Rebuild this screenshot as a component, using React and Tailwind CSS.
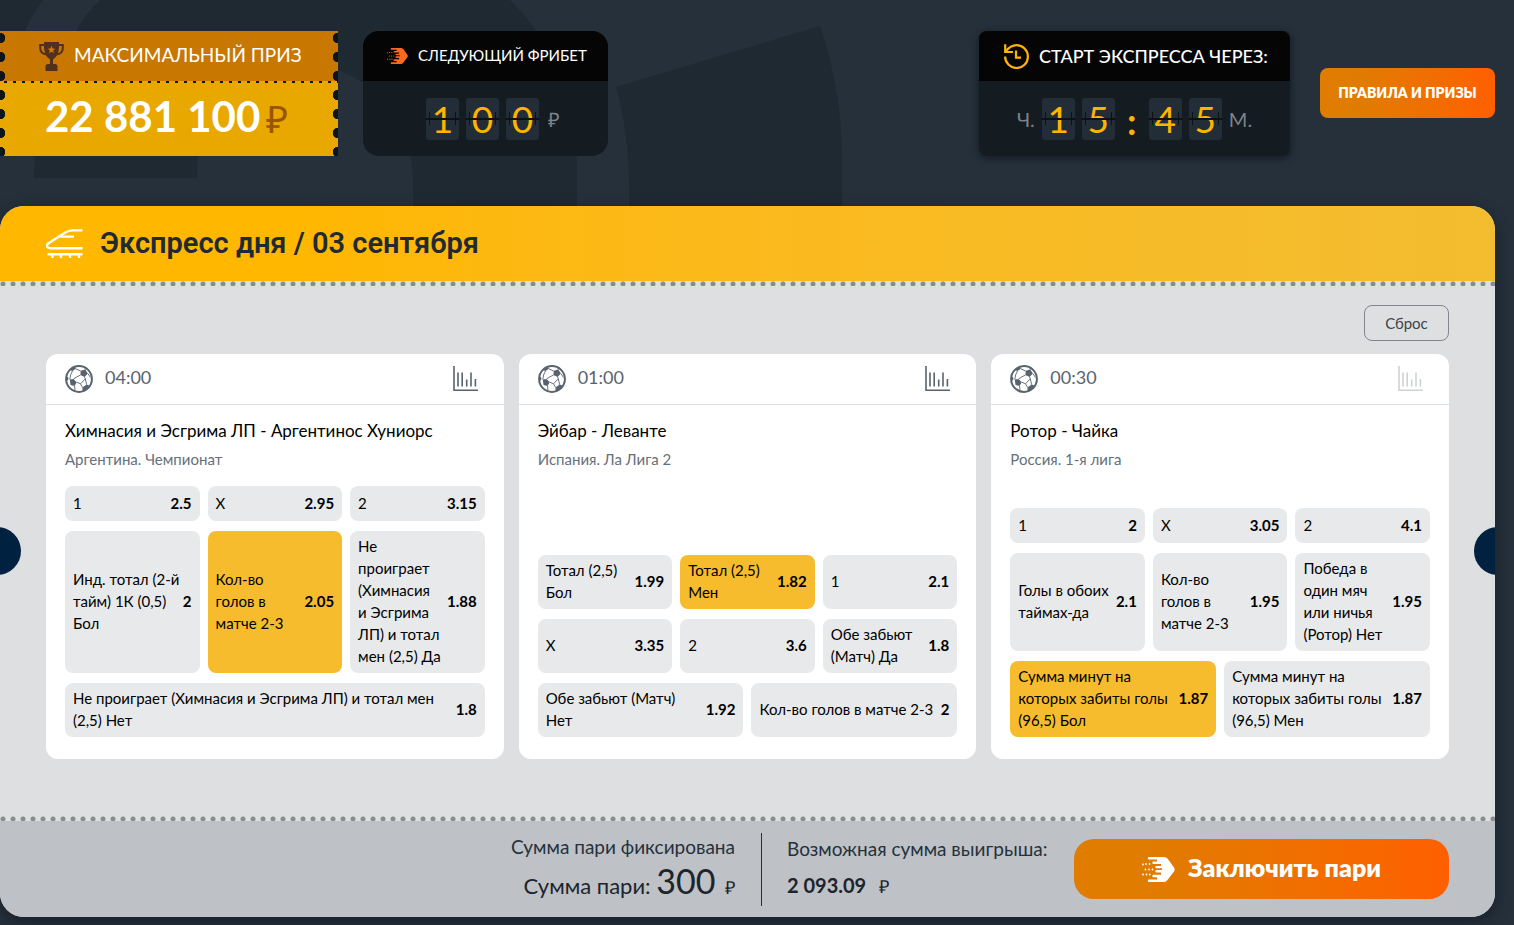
import React from "react";

const matches = [
  {
    time: "04:00",
    title: "Химнасия и Эсгрима ЛП - Аргентинос Хуниорс",
    league: "Аргентина. Чемпионат",
    stats: true,
    rows: [
      [["1", "2.5"], ["X", "2.95"], ["2", "3.15"]],
      [
        ["Инд. тотал (2-й\nтайм) 1К (0,5)\nБол", "2"],
        ["Кол-во\nголов в\nматче 2-3", "2.05", true],
        ["Не\nпроиграет\n(Химнасия\nи Эсгрима\nЛП) и тотал\nмен (2,5) Да", "1.88"],
      ],
      [["Не проиграет (Химнасия и Эсгрима ЛП) и тотал мен\n(2,5) Нет", "1.8"]],
    ],
  },
  {
    time: "01:00",
    title: "Эйбар - Леванте",
    league: "Испания. Ла Лига 2",
    stats: true,
    rows: [
      [["Тотал (2,5)\nБол", "1.99"], ["Тотал (2,5)\nМен", "1.82", true], ["1", "2.1"]],
      [["X", "3.35"], ["2", "3.6"], ["Обе забьют\n(Матч) Да", "1.8"]],
      [["Обе забьют (Матч)\nНет", "1.92"], ["Кол-во голов в матче 2-3", "2"]],
    ],
  },
  {
    time: "00:30",
    title: "Ротор - Чайка",
    league: "Россия. 1-я лига",
    stats: false,
    rows: [
      [["1", "2"], ["X", "3.05"], ["2", "4.1"]],
      [
        ["Голы в обоих\nтаймах-да", "2.1"],
        ["Кол-во\nголов в\nматче 2-3", "1.95"],
        ["Победа в\nодин мяч\nили ничья\n(Ротор) Нет", "1.95"],
      ],
      [
        ["Сумма минут на\nкоторых забиты голы\n(96,5) Бол", "1.87", true],
        ["Сумма минут на\nкоторых забиты голы\n(96,5) Мен", "1.87"],
      ],
    ],
  },
];

const columns = { 1: "grid-cols-1", 2: "grid-cols-2", 3: "grid-cols-3" };

function Backdrop() {
  return (
    <svg className="absolute left-0 top-0 -z-10" width="900" height="925" fill="#1f2932" aria-hidden="true">
      <path d="M0 0H43Q32 15 25 31L0 100Z" />
      <path d="M100 0Q85 14 76 31Q36 95 34 178H197C197 110 235 62 290 62C365 62 413 115 413 180V206H577V170C577 100 552 40 510 0Z" />
      <path d="M616 87L820 26Q842 90 842 160V206H629Q631 140 616 87Z" />
    </svg>
  );
}

function TrophyIcon() {
  return (
    <svg width="25" height="29" viewBox="0 0 25 29" aria-hidden="true">
      <path d="M6 3H1.200V6Q1.200 12 8 12.600M19 3H23.800V6Q23.800 12 17 12.600" fill="none" stroke="#52301f" strokeWidth="2" />
      <path d="M5 0H20V6Q19.500 14 14 17.500V22H16.500Q18.500 22 18.500 24.500V29H6.500V24.500Q6.500 22 8.500 22H11V17.500Q5.500 14 5 6Z" fill="#52301f" />
      <path d="M12.500 3.800L13.600 6.500L16.300 6.700L14.200 8.500L14.900 11.200L12.500 9.700L10.100 11.200L10.800 8.500L8.700 6.700L11.400 6.500Z" fill="#cb7900" />
    </svg>
  );
}

function HandIcon({ className }) {
  return (
    <svg className={className} viewBox="0 0 33 25" fill="currentColor" aria-hidden="true">
      <path d="M7 0H22Q24 0 25.500 1.600L32 10.500Q33.400 12.500 32 14.500L25.500 23Q24 25 22 25H7Q5.800 25 5.800 23.700T7 22.400H15V20.300H11.500Q10.300 20.300 10.300 19T11.500 17.700H19V15.600H14.500Q13.300 15.600 13.300 14.300T14.500 13H20V11.300H14.500Q13.300 11.300 13.300 10.100T14.500 8.900H19V7.100H11.500Q10.300 7.100 10.300 5.800T11.500 4.500H15V2.600H7Q5.800 2.600 5.800 1.300T7 0Z" />
      <g>
        <circle cx="4" cy="7" r="0.900" /><circle cx="7.500" cy="7" r="0.900" />
        <circle cx="1" cy="7.500" r="0.900" />
        <circle cx="3.500" cy="12.500" r="0.900" /><circle cx="7" cy="12.500" r="0.900" /><circle cx="10.500" cy="12.500" r="0.900" />
        <circle cx="1" cy="17.500" r="0.900" /><circle cx="4.500" cy="17.500" r="0.900" /><circle cx="7.800" cy="17.500" r="0.900" />
      </g>
    </svg>
  );
}

function HistoryIcon() {
  return (
    <svg width="25" height="25" viewBox="0 0 25 25" fill="none" stroke="#ffb400" strokeWidth="2.200" aria-hidden="true">
      <path d="M1.100 12.500A11.400 11.400 0 1 0 12.500 1.200C8.300 1.200 5 3.200 1.300 7.700" />
      <path d="M1.200 0.300V8H9" />
      <path d="M12 6.500V13.700H17" />
    </svg>
  );
}

function TrainIcon() {
  return (
    <svg width="37" height="30" viewBox="0 0 37 30" fill="none" stroke="#fff" strokeWidth="2.400" aria-hidden="true">
      <path d="M36.500 1.400H27Q22.500 1.400 18.500 4L2.500 14.200Q0.500 15.800 1 17.300Q1.700 19.200 5 19.200H36.500" />
      <path d="M14 7.600H28" />
      <path d="M1.500 25.200H36.500M6.500 25V29M15 25V29M24 25V29M33 25V29" />
    </svg>
  );
}

function BallIcon() {
  return (
    <svg width="28" height="28" viewBox="0 0 28 28" aria-hidden="true">
      <circle cx="14" cy="14" r="12.900" fill="#fff" stroke="#59636e" strokeWidth="2" />
      <g fill="#59636e">
        <path d="M15.700 5.800L20.300 4.600L22.800 8.500L19.600 12L15.400 10.100Z" />
        <path d="M4.800 14.600L8.500 14L11.700 17.200L9.600 21L5.500 20Z" />
        <path d="M17.400 22.400L21.600 19.600L24.400 20.500Q22 25 17.600 26.400Z" />
        <path d="M6.500 3.700L10.500 2L10.800 3.800L7.600 6L5.500 5.200Z" />
        <path d="M1.500 12.500L2.600 11.500L3.600 14L2 16Z" />
      </g>
      <path d="M10.800 3.800L15.700 6M20.300 4.600L20 3M22.800 8.500L25.500 12.500M19.600 12L20.300 13.800L21.600 19.600M15.400 10.100L12 11.800L8.500 14M11.700 17.200L15.500 18.800L17.500 22.400M15.500 18.800L20.300 13.800M9.600 21L10 25.500M7.400 6L5.600 10L4.800 14.600" fill="none" stroke="#59636e" strokeWidth="0.900" />
    </svg>
  );
}

function StatsIcon() {
  return (
    <svg width="25" height="26" viewBox="0 0 25 26" fill="none" stroke="currentColor" aria-hidden="true">
      <path d="M1 0V24.300H25" strokeWidth="1.600" />
      <path d="M5 6.500V20.500M9.200 6.500V20.500M13.700 13.500V20.500M18 6.500V20.500M22.400 13V20.500" strokeWidth="1.600" />
    </svg>
  );
}

function Digit({ children }) {
  return (
    <span className="relative flex h-[42px] w-[33px] items-center justify-center rounded-[3px] bg-[#232d37] text-[37px] leading-[42px] text-[#ffb400]">
      {children}
      <span className="absolute inset-x-0 top-5 h-[2px] bg-[#0b1116]" />
      <span className="absolute inset-x-[3px] top-[14px] h-[13px] border-x border-[#0b1116]" />
    </span>
  );
}

function Edge({ side }) {
  return (
    <span
      className={
        "absolute inset-y-0 w-[5px] bg-size-[5px_19px] " +
        (side === "left"
          ? "left-0 bg-[radial-gradient(circle_at_0_7px,#0d151c_5px,transparent_5.5px)]"
          : "right-0 bg-[radial-gradient(circle_at_5px_7px,#0d151c_5px,transparent_5.5px)]")
      }
    />
  );
}

function Dots() {
  return <div className="h-[5px] bg-[#dedfe1] bg-[radial-gradient(circle_at_3px_3px,#898b8c_2px,transparent_3px)] bg-size-[10px_5px]" />;
}

function Match({ match }) {
  return (
    <article className="flex min-h-[405px] flex-col rounded-xl bg-white pb-[22px]">
      <header className="flex h-[51px] items-center border-b border-[#dcdee0] pl-[19px] pr-[26px] text-[#59636e]">
        <BallIcon />
        <time className="ml-3 pb-1 text-lg leading-6">{match.time}</time>
        <button type="button" aria-label="Статистика" disabled={!match.stats} className={match.stats ? "ml-auto" : "ml-auto text-[#cfd2d5]"}>
          <StatsIcon />
        </button>
      </header>
      <div className="h-[81px] px-[19px] pt-[13px]">
        <h2 className="whitespace-nowrap text-[17px] leading-[26px] text-black">{match.title}</h2>
        <p className="text-[15px] leading-[30px] text-[#66707a]">{match.league}</p>
      </div>
      <div className="mt-auto flex flex-col gap-[10px] px-[19px]">
        {match.rows.map((row, i) => (
          <div key={i} className={"grid gap-x-2 " + columns[row.length]}>
            {row.map(([label, odd, selected]) => (
              <button
                key={label}
                type="button"
                aria-pressed={!!selected}
                className={
                  "flex min-h-[35px] min-w-0 items-center justify-between rounded-lg px-2 pb-[6px] pt-1 text-left text-[15px] leading-[22px] text-black " +
                  (selected ? "bg-[#f6bc2e]" : "bg-[#e7e9eb]")
                }
              >
                <span className="whitespace-pre">{label}</span>
                <span className="font-bold">{odd}</span>
              </button>
            ))}
          </div>
        ))}
      </div>
    </article>
  );
}

export default function App() {
  return (
    <div className="relative isolate min-h-screen overflow-hidden bg-[#25303b] pb-2 pr-[19px] font-['Lato','Open_Sans',sans-serif]">
      <Backdrop />
      <header className="flex items-start pt-[31px]">
        <section className="relative h-[125px] w-[338px] overflow-hidden bg-[#e8a800]">
          <div className="flex h-[50px] items-center bg-[#c87700] pl-[39px] text-[19px] text-white">
            <TrophyIcon />
            <h2 className="ml-[10px] whitespace-nowrap pb-[2px]">МАКСИМАЛЬНЫЙ ПРИЗ</h2>
          </div>
          <div className="h-[2px] bg-[repeating-linear-gradient(90deg,transparent_0_4px,#0d151c_4px_7px,transparent_7px_9px)]" />
          <p className="flex h-[73px] items-center pb-[6px] pl-[45px] text-[42px] font-bold text-white">
            22 881 100<span className="ml-[6px] pt-[3px] text-[38px] font-normal text-[#985600]">₽</span>
          </p>
          <Edge side="left" />
          <Edge side="right" />
        </section>

        <section className="ml-[25px] h-[125px] w-[245px] overflow-hidden rounded-2xl bg-[#141b21]">
          <div className="flex h-[50px] items-center bg-[#050505] pl-6 text-white">
            <HandIcon className="h-4 w-[21px] text-[#f96a1f]" />
            <h2 className="ml-[10px] whitespace-nowrap pb-[2px] text-[15px]">СЛЕДУЮЩИЙ ФРИБЕТ</h2>
          </div>
          <div className="flex h-[75px] items-center gap-[7px] pl-[63px]">
            <Digit>1</Digit>
            <Digit>0</Digit>
            <Digit>0</Digit>
            <span className="ml-[2px] text-xl text-[#7c828a]">₽</span>
          </div>
        </section>

        <section className="ml-auto h-[125px] w-[311px] overflow-hidden rounded-lg bg-[#141b21] shadow-[0_2px_8px_rgba(0,0,0,0.5)]">
          <div className="flex h-[50px] items-center bg-[#050505] pl-[25px] text-white">
            <HistoryIcon />
            <h2 className="ml-[10px] whitespace-nowrap text-lg font-medium">СТАРТ ЭКСПРЕССА ЧЕРЕЗ:</h2>
          </div>
          <div className="flex h-[75px] items-center justify-center gap-[7px] text-xl text-[#7c828a]">
            <span>Ч.</span>
            <Digit>1</Digit>
            <Digit>5</Digit>
            <span className="w-5 pt-1 text-center text-[37px] font-bold leading-[42px] text-[#ffb400]">:</span>
            <Digit>4</Digit>
            <Digit>5</Digit>
            <span>М.</span>
          </div>
        </section>

        <button type="button" className="ml-[30px] mt-[37px] h-[50px] w-[175px] whitespace-nowrap rounded-lg bg-linear-to-r from-[#e07c00] from-20% to-[#ff5f00] text-sm font-extrabold text-white">
          ПРАВИЛА И ПРИЗЫ
        </button>
      </header>

      <main className="relative mt-[50px] overflow-hidden rounded-3xl bg-[#dedfe1] shadow-[0_4px_16px_rgba(0,0,0,0.35)]">
        <div className="flex h-[75px] items-center bg-linear-to-r from-[#ffb700] from-20% to-[#f3bd31] pl-[46px]">
          <TrainIcon />
          <h1 className="ml-[17px] font-['Roboto',sans-serif] text-[29px] font-semibold text-[#1f2a33]">Экспресс дня / 03 сентября</h1>
        </div>
        <Dots />
        <div className="px-[46px] pb-[57px] pt-[19px]">
          <div className="mb-[13px] flex justify-end">
            <button type="button" className="h-9 w-[85px] rounded-lg border border-[#81868e] text-[15px] text-[#3c444d]">Сброс</button>
          </div>
          <div className="grid grid-cols-3 gap-[15px]">
            {matches.map((m) => (
              <Match key={m.title} match={m} />
            ))}
          </div>
        </div>
        <button type="button" aria-label="Назад" className="absolute -left-[27px] top-[321px] size-12 rounded-full bg-[#00213f]" />
        <button type="button" aria-label="Вперёд" className="absolute -right-[27px] top-[321px] size-12 rounded-full bg-[#00213f]" />
        <Dots />
        <footer className="flex h-24 items-center justify-end bg-[#bec1c6] pr-[46px] text-[#25313c]">
          <div className="pr-[26px] text-right">
            <p className="text-[19px] leading-7">Сумма пари фиксирована</p>
            <p className="text-[22px] leading-10 text-[#1c242c]">
              Сумма пари: <span className="text-[34px]">300</span> <span className="ml-1 text-lg">₽</span>
            </p>
          </div>
          <div className="flex h-[73px] w-[313px] flex-col border-l border-[#25313c] pl-[25px]">
            <p className="text-[19px] leading-8">Возможная сумма выигрыша:</p>
            <p className="text-xl font-bold leading-10 text-[#1c242c]">
              2 093.09 <span className="ml-2 text-lg font-medium">₽</span>
            </p>
          </div>
          <button type="button" className="flex h-[60px] w-[375px] items-center justify-center gap-[13px] rounded-[20px] bg-linear-to-r from-[#e07c00] from-20% to-[#ff5f00] text-[25px] font-extrabold text-white">
            <HandIcon className="h-[25px] w-[33px]" />
            <span className="pb-[3px]">Заключить пари</span>
          </button>
        </footer>
      </main>
    </div>
  );
}
